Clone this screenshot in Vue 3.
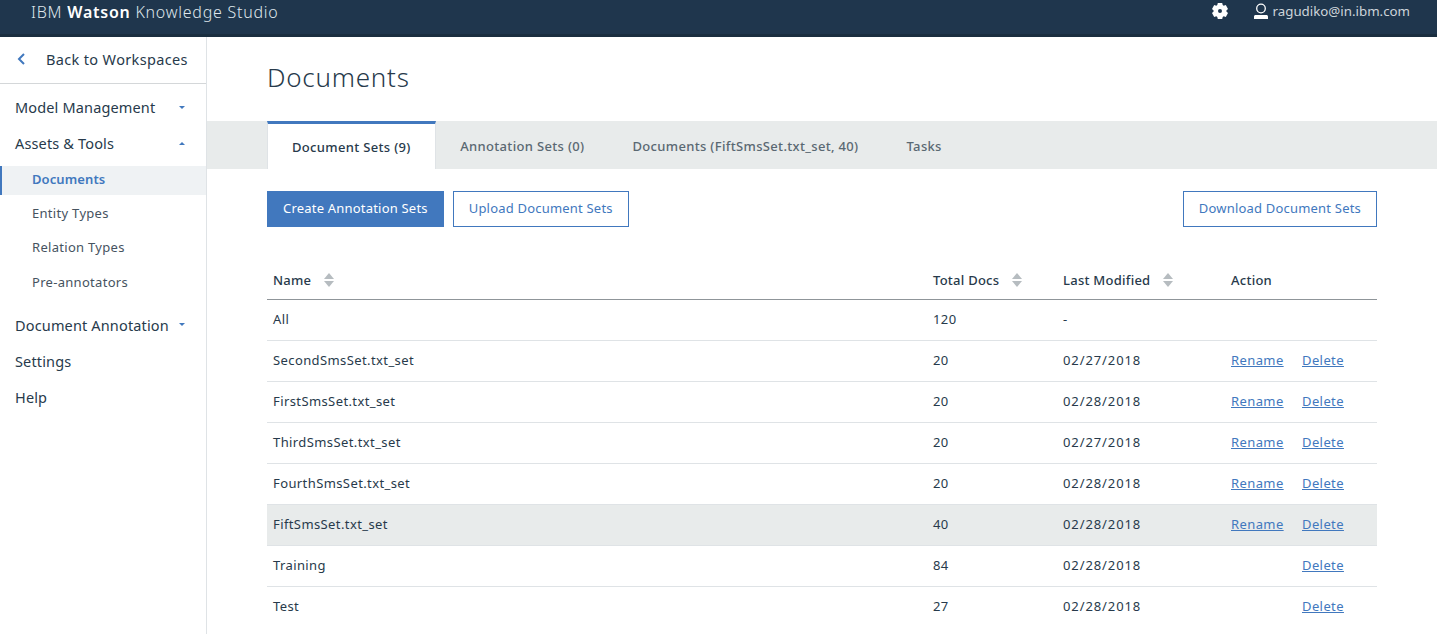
<script setup>
const nav = [
  { label: 'Model Management', caret: 'down' },
  { label: 'Assets & Tools', caret: 'up' }
]
const subs = ['Documents', 'Entity Types', 'Relation Types', 'Pre-annotators']
const tabs = ['Document Sets (9)', 'Annotation Sets (0)', 'Documents (FiftSmsSet.txt_set, 40)', 'Tasks']
const rows = [
  { name: 'All', docs: 120, date: '-' },
  { name: 'SecondSmsSet.txt_set', docs: 20, date: '02/27/2018', rename: true, del: true },
  { name: 'FirstSmsSet.txt_set', docs: 20, date: '02/28/2018', rename: true, del: true },
  { name: 'ThirdSmsSet.txt_set', docs: 20, date: '02/27/2018', rename: true, del: true },
  { name: 'FourthSmsSet.txt_set', docs: 20, date: '02/28/2018', rename: true, del: true },
  { name: 'FiftSmsSet.txt_set', docs: 40, date: '02/28/2018', rename: true, del: true, active: true },
  { name: 'Training', docs: 84, date: '02/28/2018', del: true },
  { name: 'Test', docs: 27, date: '02/28/2018', del: true }
]
</script>

<template>
  <div class="page">
    <header class="top">
      <div class="brand">IBM <b>Watson</b> Knowledge Studio</div>
      <div class="user">
        <svg class="gear" width="18" height="18" viewBox="0 0 18 18"><path fill="#fff" fill-rule="evenodd" d="M6.800 1h4.400l.5 2.100 1 .6 2.100-.6 2.200 3.800-1.600 1.500v1.200l1.600 1.500-2.200 3.800-2.100-.6-1 .6-.5 2.100H6.800l-.5-2.100-1-.6-2.100.6L1 11.100l1.600-1.500V8.400L1 6.900l2.200-3.800 2.100.6 1-.6zM9 7a2 2 0 1 0 0 4 2 2 0 0 0 0-4z"/></svg>
        <svg class="person" width="14" height="18" viewBox="0 0 14 18"><circle cx="7" cy="6.500" r="4.300" fill="none" stroke="#fff" stroke-width="1.300"/><path fill="#fff" d="M0 14.500c0-1 .8-1.500 1.800-1.500h10.400c1 0 1.800.5 1.800 1.500V17H0z"/></svg>
        <span>ragudiko@in.ibm.com</span>
      </div>
    </header>
    <div class="body">
      <aside class="side">
        <div class="back">
          <svg width="9" height="12" viewBox="0 0 9 12"><path d="M7 1 2 6l5 5" fill="none" stroke="#4178be" stroke-width="2"/></svg>
          <span>Back to Workspaces</span>
        </div>
        <nav class="nav">
          <div v-for="n in nav" :key="n.label" class="item">
            <span>{{ n.label }}</span><i :class="['caret', n.caret]"></i>
          </div>
          <div class="subs">
            <div v-for="(s, i) in subs" :key="s" :class="['sub', { on: i === 0 }]">{{ s }}</div>
          </div>
          <div class="item"><span>Document Annotation</span><i class="caret down"></i></div>
          <div class="item">Settings</div>
          <div class="item">Help</div>
        </nav>
      </aside>
      <main class="main">
        <h1>Documents</h1>
        <div class="tabs">
          <div v-for="(t, i) in tabs" :key="t" :class="['tab', { on: i === 0 }]">{{ t }}</div>
        </div>
        <div class="content">
          <div class="actions">
            <button class="btn primary">Create Annotation Sets</button>
            <button class="btn">Upload Document Sets</button>
            <button class="btn end">Download Document Sets</button>
          </div>
          <div class="grid head">
            <div class="th">Name<i class="sort"></i></div>
            <div class="th">Total Docs<i class="sort"></i></div>
            <div class="th">Last Modified<i class="sort"></i></div>
            <div class="th">Action</div>
          </div>
          <div v-for="r in rows" :key="r.name" :class="['grid', 'row', { active: r.active }]">
            <div>{{ r.name }}</div>
            <div>{{ r.docs }}</div>
            <div class="date">{{ r.date }}</div>
            <div class="links">
              <a :class="{ ghost: !r.rename }">{{ r.rename ? 'Rename' : '' }}</a>
              <a v-if="r.del">Delete</a>
            </div>
          </div>
        </div>
      </main>
    </div>
  </div>
</template>

<style>
html, body { margin: 0; background: #fff; overflow: hidden; }
</style>

<style scoped>
.page { width: 1437px; height: 634px; overflow: hidden; font-family: "Noto Sans", "Open Sans", sans-serif; color: #273a4b; display: flex; flex-direction: column; }
.top { height: 37px; flex: none; box-sizing: border-box; background: #1f364d; border-bottom: 3px solid #1a2e3f; display: flex; align-items: center; justify-content: space-between; color: #fff; padding: 0 27px 10px 31px; }
.brand { font-size: 16px; letter-spacing: .75px; color: #dfe6ec; font-weight: 300; }
.brand b { font-weight: 600; color: #fff; }
.user { display: flex; align-items: center; font-size: 13.300px; color: #cdd4da; padding-bottom: 2px; }
.gear { margin-right: 25px; }
.person { margin-right: 5px; }
.body { flex: 1; display: flex; min-height: 0; }
.side { width: 207px; flex: none; box-sizing: border-box; border-right: 1px solid #dfe3e6; }
.back { height: 47px; box-sizing: border-box; border-bottom: 1px solid #d4d7d9; display: flex; align-items: center; padding: 0 0 3px 17px; font-size: 14.500px; gap: 20px; letter-spacing: .35px; }
.nav { padding-top: 5px; }
.item { height: 36px; display: flex; align-items: center; padding: 0 21px 0 15px; font-size: 14.500px; justify-content: space-between; letter-spacing: .15px; }
.subs { margin: 5px 0 9px; }
.sub { height: 29px; box-sizing: border-box; margin-bottom: 5.200px; padding: 0 0 3px 32px; display: flex; align-items: center; font-size: 13px; letter-spacing: .3px; color: #46535f; }
.sub.on { background: #eff2f4; color: #4178be; font-weight: 600; border-left: 2px solid #4178be; padding-left: 30px; letter-spacing: .1px; }
.caret { width: 0; height: 0; border-left: 3.500px solid transparent; border-right: 3.500px solid transparent; }
.caret.down { border-top: 3.500px solid #4178be; }
.caret.up { border-bottom: 3.500px solid #4178be; }
.main { flex: 1; min-width: 0; }
h1 { margin: 0; height: 84px; box-sizing: border-box; padding: 22px 0 0 60px; font-size: 26px; font-weight: 300; line-height: 36px; color: #273a4b; letter-spacing: .75px; }
.tabs { height: 48px; background: #e8ebeb; display: flex; padding-left: 60px; box-sizing: border-box; align-items: stretch; }
.tab { padding: 2px 24px 0; display: flex; align-items: center; font-size: 13px; font-weight: 500; color: #5a6872; letter-spacing: .33px; }
.tab.on { background: #fff; border-top: 3px solid #4178be; border-left: 1px solid #dfe3e6; border-right: 1px solid #dfe3e6; color: #273a4b; padding: 0 24.500px 0 24px; }
.content { padding: 22px 60px 0; }
.actions { display: flex; gap: 9px; height: 36px; }
.btn { height: 36px; box-sizing: border-box; border: 1px solid #4178be; background: #fff; color: #4178be; padding: 0 15px 2px; font: inherit; font-size: 13px; letter-spacing: .2px; }
.btn.primary { background: #4178be; color: #fff; }
.btn.end { margin-left: auto; }
.grid { display: grid; grid-template-columns: 660px 130px 168px 1fr; font-size: 13px; letter-spacing: .4px; }
.grid > div { padding-left: 6px; }
.head { margin-top: 36px; height: 37px; border-bottom: 1px solid #8f9599; align-items: center; font-weight: 500; box-sizing: border-box; letter-spacing: .25px; padding-bottom: 2px; }
.th { display: flex; align-items: center; }
.sort { display: inline-block; position: relative; width: 10px; height: 14px; margin-left: 13px; }
.sort::before, .sort::after { content: ""; position: absolute; left: 0; border-left: 5px solid transparent; border-right: 5px solid transparent; }
.sort::before { top: 0; border-bottom: 6px solid #b6bcc0; }
.sort::after { bottom: 0; border-top: 6px solid #b6bcc0; }
.row { height: 41px; box-sizing: border-box; border-bottom: 1px solid #dfe3e6; align-items: center; padding-bottom: 2px; }
.row:last-child { border-bottom: none; padding-bottom: 3px; }
.row.active { background: #e8ebeb; }
.date { letter-spacing: .9px; }
.links { display: flex; gap: 19px; color: #4178be; }
.links a { text-decoration: underline; width: 52px; }
.links a + a { width: auto; }
.links a.ghost { text-decoration: none; }
</style>
